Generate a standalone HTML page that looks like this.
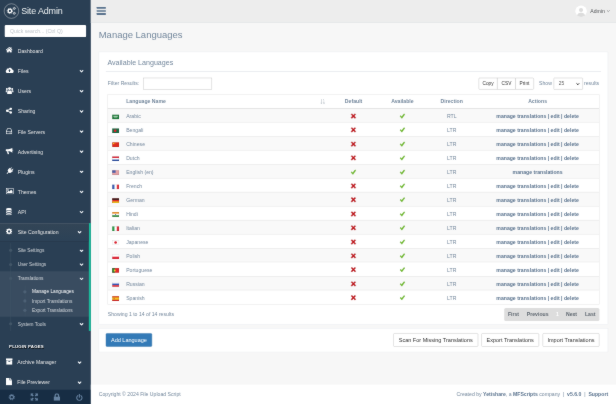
<!DOCTYPE html>
<html><head><meta charset="utf-8"><title>Manage Languages</title>
<style>
*{box-sizing:border-box;}
html,body{margin:0;padding:0;width:616px;height:404px;overflow:hidden;background:#F7F7F7;}
body{font-family:"Liberation Sans",sans-serif;}
#outer{position:absolute;left:0;top:0;width:616px;height:404px;overflow:hidden;filter:url(#soft);}
#wrap{position:absolute;left:0;top:0;width:1560px;height:1023px;transform:scale(0.394872);transform-origin:0 0;background:#F7F7F7;color:#73879C;font-size:13px;line-height:1.471;overflow:hidden;}
a{color:inherit;text-decoration:none;}
ul{list-style:none;margin:0;padding:0;}
/* sidebar */
#side{position:absolute;left:0;top:0;width:230px;height:1023px;background:#2A3F54;color:#ECF0F1;}
#logo{position:absolute;left:10px;top:9px;width:38px;height:38px;border:1.7px solid #EAEAEA;border-radius:50%;}
#logo svg{position:absolute;}
#title{position:absolute;left:53.5px;top:0;height:57px;line-height:57.5px;font-size:22.7px;letter-spacing:-0.33px;color:#ECF0F1;white-space:nowrap;}
#search{position:absolute;left:12px;top:63px;width:206px;height:31px;background:#fff;border-radius:3px;color:#bfc5cb;font-size:13px;line-height:31px;padding-left:13.6px;}
#menu{position:absolute;left:0;top:106.4px;width:230px;}
#menu>li{position:relative;}
#menu>li>a{display:block;height:45px;margin-bottom:6px;position:relative;color:#E7E7E7;font-size:13px;font-weight:normal;}
#menu .mi{position:absolute;fill:#fff;}
#menu .t{position:absolute;left:45px;top:0;line-height:47.8px;white-space:nowrap;}
#menu .chev{position:absolute;right:18.5px;top:19px;}
#menu>li.active{border-right:5px solid #1ABB9C;}
#menu>li.active>a{background:linear-gradient(#334556,#2C4257);box-shadow:rgba(0,0,0,.25) 0 1px 0, inset rgba(255,255,255,.16) 0 1px 0;}
.child{position:relative;}
.child>li{position:relative;}
.child>li>a{display:block;height:35.5px;line-height:35.5px;padding-left:45px;font-size:12px;color:rgba(255,255,255,.75);position:relative;white-space:nowrap;}
.child>li:before{content:"";position:absolute;left:23px;top:14px;width:8px;height:8px;border-radius:50%;background:#425668;z-index:1;}
.child>li:after{content:"";position:absolute;left:27px;top:0;bottom:0;border-left:1px solid #425668;}
.child .chev{right:13px !important;top:14.5px !important;}
.child>li.cur{background:rgba(255,255,255,0.07);}
.sub{padding:4px 0 5px;position:relative;}
.sub>li{position:relative;}
.sub>li>a{display:block;height:23.4px;line-height:23.4px;padding-left:81px;font-size:12px;color:rgba(255,255,255,.75);white-space:nowrap;}
.sub>li:before{content:"";position:absolute;left:59px;top:8px;width:8px;height:8px;border-radius:50%;background:#4d6175;z-index:1;}
.sub:after{content:"";position:absolute;left:63px;top:0;bottom:0;border-left:1px solid #425668;}
.sub>li.on>a{color:#fff;}
#ph{position:absolute;left:23px;top:868px;font-size:11px;font-weight:bold;letter-spacing:.5px;color:#fff;text-shadow:1px 1px #000;line-height:20px;white-space:nowrap;}
#menu2{position:absolute;left:0;top:894.8px;width:230px;}
#menu2>li>a{display:block;height:45px;margin-bottom:6.4px;position:relative;color:#E7E7E7;font-size:13px;}
#menu2 .mi{position:absolute;fill:#fff;}
#menu2 .t{position:absolute;left:44px;top:0;line-height:45px;white-space:nowrap;}
#menu2 .chev{position:absolute;right:23.5px;top:19px;}
#sfoot{position:absolute;left:0;top:987px;width:230px;height:36px;background:#172D44;}
#sfoot svg{position:absolute;}
/* top nav */
#top{position:absolute;left:230px;top:0;width:1330px;height:58px;background:#EDEDED;border-bottom:1px solid #D9DEE4;}
#burger{position:absolute;left:15px;top:18px;width:23px;height:20px;}
#burger i{display:block;height:4.4px;background:#5A738E;margin-bottom:3.2px;border-radius:.5px;}
#avatar{position:absolute;left:1227px;top:14px;width:29px;height:29px;border-radius:50%;background:#fff;overflow:hidden;}
#user{position:absolute;left:1265px;top:0;line-height:56px;font-size:13px;color:#515356;white-space:nowrap;}
/* content */
h3#pt{position:absolute;left:250px;top:73px;margin:0;font-size:24px;font-weight:normal;line-height:31px;color:#73879C;white-space:nowrap;}
.panel{position:absolute;left:250px;width:1290px;background:#fff;border:1px solid #E6E9ED;}
#p1{top:131px;height:691px;}
#p1i{position:absolute;left:0;top:2px;width:100%;}
#p2{top:831px;height:61px;}
#p1 h2{position:absolute;left:21px;top:11px;margin:0;font-size:18px;font-weight:normal;line-height:27px;color:#73879C;white-space:nowrap;}
#xt{position:absolute;left:17px;top:46px;width:1254px;border-bottom:2px solid #E6E9ED;}
#fl{position:absolute;left:22px;top:63px;line-height:30px;font-size:13px;white-space:nowrap;}
#fi{position:absolute;left:112px;top:63px;width:174px;height:30px;border:1px solid #bbb;background:#fff;}
.btn{position:absolute;height:30px;border:1px solid #bbb;background:#fff;color:#333;font-size:12px;line-height:28px;text-align:center;white-space:nowrap;}
#show{position:absolute;left:1114px;top:63px;line-height:30px;white-space:nowrap;}
#sel{position:absolute;left:1151px;top:63px;width:74px;height:30px;border:1px solid #bbb;border-radius:2px;background:#fff;color:#555;font-size:12px;line-height:28px;padding-left:12px;}
#res{position:absolute;left:1228px;top:63px;line-height:30px;white-space:nowrap;}
#tb{position:absolute;left:22px;top:105.8px;width:1244px;height:529.9px;font-size:13px;color:#73879C;}
.ln{position:absolute;background:#ddd;z-index:3;}
#th{position:absolute;left:0;top:0;width:1244px;height:35.8px;border-bottom:2px solid #ddd;background:#fff;z-index:2;font-weight:bold;line-height:33.2px;}
.r{position:absolute;left:0;width:1244px;height:35.4px;border-top:1px solid #ddd;line-height:39.2px;background:#fff;}
.r.odd{background:#f9f9f9;}
.k{position:absolute;top:0;white-space:nowrap;text-align:center;}
.fl{left:0;width:39.8px;}
.nm{left:46.5px;text-align:left;}
.c1{left:522.4px;width:200px;}
.c2{left:646px;width:200px;}
.c3{left:771px;width:200px;}
.c4{left:928.4px;width:320px;}
.act{font-weight:bold;color:#5A738E;}
svg.flag{display:inline-block;vertical-align:middle;}
svg.ic{display:inline-block;vertical-align:middle;position:relative;top:-1.7px;}
#info{position:absolute;left:22px;top:651px;line-height:20px;white-space:nowrap;}
#pag{position:absolute;left:1026px;top:645.5px;width:241px;height:33.5px;background:#ddd;border-radius:4px;font-size:13px;font-weight:bold;color:#5d666f;line-height:33.5px;}
#pag span{position:absolute;top:0;white-space:nowrap;}
.bb{position:absolute;top:12px;height:34px;border:1px solid #bbb;border-radius:3px;background:#fff;color:#333;font-size:14px;line-height:30.5px;text-align:center;white-space:nowrap;}
#add{left:17px;width:117px;background:#337ab7;border-color:#2e6da4;color:#fff;}
#foot{position:absolute;left:230px;top:974px;width:1330px;height:49px;background:#fff;font-size:13px;}
#foot .fL{position:absolute;left:20px;top:0;line-height:50px;white-space:nowrap;}
#foot .fR{position:absolute;right:20px;top:0;line-height:50px;white-space:pre;}
#foot b{color:#5A738E;}
</style></head><body>
<svg width="0" height="0" style="position:absolute"><defs><filter id="soft" x="0" y="0" width="100%" height="100%" color-interpolation-filters="sRGB"><feConvolveMatrix order="3" kernelMatrix="0.5 1.0 0.5 1.0 20.0 1.0 0.5 1.0 0.5" edgeMode="duplicate" preserveAlpha="true"/></filter></defs></svg>
<div id="outer"><div id="wrap">
 <div id="side">
  <div id="logo"><svg width="36" height="36" viewBox="0 0 36 36" style="left:-0.7px;top:-0.7px"><g fill="none" stroke="#fff"><circle cx="15" cy="18.8" r="4.4" stroke-width="3.2"/><circle cx="15" cy="18.8" r="6.7" stroke-width="2" stroke-dasharray="2.8 2.462"/><circle cx="26.2" cy="12.4" r="2.1" stroke-width="1.7"/><circle cx="26.2" cy="12.4" r="3.4" stroke-width="1.1" stroke-dasharray="1.4 1.27"/><circle cx="26.2" cy="24.6" r="2.1" stroke-width="1.7"/><circle cx="26.2" cy="24.6" r="3.4" stroke-width="1.1" stroke-dasharray="1.4 1.27"/></g></svg></div>
  <div id="title">Site Admin</div>
  <div id="search">Quick search... (Ctrl Q)</div>
  <ul id="menu">
<li><a><svg class="mi" style="left:15px;top:12.20px" width="16.8" height="14.6" viewBox="0 0 16.5 14" preserveAspectRatio="none"><path d="M8.25 0 L0 7 L1.2 8.5 L8.25 2.5 L15.3 8.5 L16.5 7 L13.8 4.7 V0.8 H11.4 V2.7 Z"/><path d="M8.25 3.6 L2.2 8.7 V14 H7 V10.2 H9.5 V14 H14.3 V8.7 Z"/></svg><span class="t">Dashboard</span></a></li>
<li><a><svg class="mi" style="left:14.3px;top:11.60px" width="20.3" height="16" viewBox="0 -0.6 20 16" preserveAspectRatio="none"><path d="M16.4 6.6 A5.2 5.2 0 0 0 6.8 4.2 A3.4 3.4 0 0 0 2.6 7.4 A4.2 4.2 0 0 0 4.2 15.4 H15.8 A4.4 4.4 0 0 0 16.4 6.6 Z M10 5.6 L13.4 9.2 H11.2 V12.8 H8.8 V9.2 H6.6 Z" fill-rule="evenodd"/></svg><span class="t">Files</span><svg class="chev" width="11" height="8" viewBox="0 0 11 8"><path d="M1.2 1.6 L5.5 5.9 L9.8 1.6" stroke="#eef2f6" stroke-width="2.9" fill="none"/></svg></a></li>
<li><a><svg class="mi" style="left:14.3px;top:12.00px" width="20.3" height="18" viewBox="0 0 20 18" preserveAspectRatio="none"><circle cx="10" cy="4.4" r="3.7"/><path d="M4.2 17.8 V12.8 A3.6 3.6 0 0 1 7.8 9.2 H12.2 A3.6 3.6 0 0 1 15.8 12.8 V17.8 Z"/><circle cx="3.4" cy="5.4" r="2.5"/><circle cx="16.6" cy="5.4" r="2.5"/><path d="M0 13.8 V10.8 A2.4 2.4 0 0 1 2.4 8.4 H5.2 A5.4 5.4 0 0 0 3.2 13.8 Z"/><path d="M20 13.8 V10.8 A2.4 2.4 0 0 0 17.6 8.4 H14.8 A5.4 5.4 0 0 1 16.8 13.8 Z"/></svg><span class="t">Users</span><svg class="chev" width="11" height="8" viewBox="0 0 11 8"><path d="M1.2 1.6 L5.5 5.9 L9.8 1.6" stroke="#eef2f6" stroke-width="2.9" fill="none"/></svg></a></li>
<li><a><svg class="mi" style="left:15px;top:12.40px" width="15.5" height="16.4" viewBox="0 0 15.5 16.4" preserveAspectRatio="none"><circle cx="12.3" cy="3.2" r="3.2"/><circle cx="12.3" cy="13.2" r="3.2"/><circle cx="3.2" cy="8.2" r="3.2"/><path d="M3.2 8.2 L12.3 3.2 M3.2 8.2 L12.3 13.2" stroke="#fff" stroke-width="2.2" fill="none"/></svg><span class="t">Sharing</span><svg class="chev" width="11" height="8" viewBox="0 0 11 8"><path d="M1.2 1.6 L5.5 5.9 L9.8 1.6" stroke="#eef2f6" stroke-width="2.9" fill="none"/></svg></a></li>
<li><a><svg class="mi" style="left:15px;top:14.50px" width="16" height="15" viewBox="0 0 16 15" preserveAspectRatio="none"><path d="M3.2 0 H12.8 L16 8.6 V13.6 A1.4 1.4 0 0 1 14.6 15 H1.4 A1.4 1.4 0 0 1 0 13.6 V8.6 Z M4.3 1.6 L2 8 H14 L11.7 1.6 Z M1.6 9.6 V13.4 H14.4 V9.6 Z M9.4 10.8 H10.8 V12.2 H9.4 Z M11.8 10.8 H13.2 V12.2 H11.8 Z" fill-rule="evenodd"/></svg><span class="t" style="line-height:49.6px">File Servers</span><svg class="chev" width="11" height="8" viewBox="0 0 11 8"><path d="M1.2 1.6 L5.5 5.9 L9.8 1.6" stroke="#eef2f6" stroke-width="2.9" fill="none"/></svg></a></li>
<li><a><svg class="mi" style="left:14.3px;top:12.90px" width="19.6" height="17" viewBox="0 0 19.6 17" preserveAspectRatio="none"><path d="M17.2 0.4 V12.8 C13.8 10.2 10.4 9.4 7.2 9.2 H2 A2 2 0 0 1 0 7.2 V6 A2 2 0 0 1 2 4 H7.2 C10.4 3.8 13.8 3 17.2 0.4 Z"/><path d="M3.4 9.2 H7 L8.8 15.2 A1 1 0 0 1 7.8 16.8 H5.6 Z"/><path d="M17.8 4.6 A2 2 0 0 1 17.8 8.6 Z"/></svg><span class="t">Advertising</span><svg class="chev" width="11" height="8" viewBox="0 0 11 8"><path d="M1.2 1.6 L5.5 5.9 L9.8 1.6" stroke="#eef2f6" stroke-width="2.9" fill="none"/></svg></a></li>
<li><a><svg class="mi" style="left:15px;top:12.10px" width="19" height="17.8" viewBox="0 0 19 17.8" preserveAspectRatio="none"><g transform="translate(10.6 7.8) rotate(45) scale(0.92)"><rect x="-4.2" y="-10" width="2.4" height="6"/><rect x="1.8" y="-10" width="2.4" height="6"/><rect x="-6.8" y="-4.4" width="13.6" height="2.4"/><path d="M-6 -2 H6 V0.6 A6 6 0 0 1 -6 0.6 Z"/><rect x="-1.2" y="6" width="2.4" height="6.5"/></g></svg><span class="t">Plugins</span><svg class="chev" width="11" height="8" viewBox="0 0 11 8"><path d="M1.2 1.6 L5.5 5.9 L9.8 1.6" stroke="#eef2f6" stroke-width="2.9" fill="none"/></svg></a></li>
<li><a><svg class="mi" style="left:15px;top:13.00px" width="19.6" height="16" viewBox="0 0 19.6 16" preserveAspectRatio="none"><path d="M1.4 0 H18.2 A1.4 1.4 0 0 1 19.6 1.4 V14.6 A1.4 1.4 0 0 1 18.2 16 H1.4 A1.4 1.4 0 0 1 0 14.6 V1.4 A1.4 1.4 0 0 1 1.4 0 Z M1.6 1.6 V14.4 H18 V1.6 Z M3 13 V10.6 L6.4 7.2 L8.4 9.2 L13.2 4.4 L16.6 7.8 V13 Z M5.2 3 A1.9 1.9 0 1 0 5.21 3 Z" fill-rule="evenodd"/></svg><span class="t">Themes</span><svg class="chev" width="11" height="8" viewBox="0 0 11 8"><path d="M1.2 1.6 L5.5 5.9 L9.8 1.6" stroke="#eef2f6" stroke-width="2.9" fill="none"/></svg></a></li>
<li><a><svg class="mi" style="left:15px;top:12.20px" width="15" height="18" viewBox="0 0 15 18" preserveAspectRatio="none"><ellipse cx="7.5" cy="3" rx="7.5" ry="3"/><path d="M0 5.2 C2 7.8 13 7.8 15 5.2 V8 C13 10.6 2 10.6 0 8 Z"/><path d="M0 9.7 C2 12.3 13 12.3 15 9.7 V12.5 C13 15.1 2 15.1 0 12.5 Z"/><path d="M0 14.2 C2 16.8 13 16.8 15 14.2 V15.4 C13 18.8 2 18.8 0 15.4 Z"/></svg><span class="t">API</span><svg class="chev" width="11" height="8" viewBox="0 0 11 8"><path d="M1.2 1.6 L5.5 5.9 L9.8 1.6" stroke="#eef2f6" stroke-width="2.9" fill="none"/></svg></a></li>

   <li class="active"><a><svg class="mi" style="left:15px;top:13.00px" width="16" height="16" viewBox="1 1 16 16" preserveAspectRatio="none"><path d="M9 1 L10.2 1 L10.7 3 L12.2 3.6 L14 2.6 L15.6 4.2 L14.5 5.9 L15.1 7.4 L17 7.9 V10.1 L15.1 10.6 L14.5 12.1 L15.6 13.8 L14 15.4 L12.2 14.4 L10.7 15 L10.2 17 H7.8 L7.3 15 L5.8 14.4 L4 15.4 L2.4 13.8 L3.5 12.1 L2.9 10.6 L1 10.1 V7.9 L2.9 7.4 L3.5 5.9 L2.4 4.2 L4 2.6 L5.8 3.6 L7.3 3 L7.8 1 Z M9 6.2 A2.8 2.8 0 1 0 9.01 6.2 Z" fill-rule="evenodd"/></svg><span class="t">Site Configuration</span><svg class="chev" width="11" height="8" viewBox="0 0 11 8"><path d="M1.2 1.6 L5.5 5.9 L9.8 1.6" stroke="#eef2f6" stroke-width="2.9" fill="none"/></svg></a>
    <ul class="child">
     <li><a>Site Settings<svg class="chev" width="11" height="8" viewBox="0 0 11 8"><path d="M1.2 1.6 L5.5 5.9 L9.8 1.6" stroke="#eef2f6" stroke-width="2.9" fill="none"/></svg></a></li>
     <li><a>User Settings<svg class="chev" width="11" height="8" viewBox="0 0 11 8"><path d="M1.2 1.6 L5.5 5.9 L9.8 1.6" stroke="#eef2f6" stroke-width="2.9" fill="none"/></svg></a></li>
     <li class="cur"><a>Translations<svg class="chev" width="11" height="8" viewBox="0 0 11 8"><path d="M1.2 1.6 L5.5 5.9 L9.8 1.6" stroke="#eef2f6" stroke-width="2.9" fill="none"/></svg></a>
      <ul class="sub">
       <li class="on"><a>Manage Languages</a></li>
       <li><a style="position:relative;top:1.4px">Import Translations</a></li>
       <li><a>Export Translations</a></li>
      </ul>
     </li>
     <li><a style="line-height:38.5px">System Tools<svg class="chev" width="11" height="8" viewBox="0 0 11 8"><path d="M1.2 1.6 L5.5 5.9 L9.8 1.6" stroke="#eef2f6" stroke-width="2.9" fill="none"/></svg></a></li>
    </ul>
   </li>
  </ul>
  <div id="ph">PLUGIN PAGES</div>
  <ul id="menu2">
   <li><a><svg class="mi" style="left:15.3px;top:12.20px" width="17.2" height="17" viewBox="0 0 17.2 17" preserveAspectRatio="none"><path d="M0 0 H17.2 V4.6 H0 Z M1 5.6 H16.2 V17 H1 Z M6.2 7.6 V9.6 H11 V7.6 Z" fill-rule="evenodd"/></svg><span class="t">Archive Manager</span><svg class="chev" width="11" height="8" viewBox="0 0 11 8"><path d="M1.2 1.6 L5.5 5.9 L9.8 1.6" stroke="#eef2f6" stroke-width="2.9" fill="none"/></svg></a></li>
   <li><a><svg class="mi" style="left:15.3px;top:10.95px" width="15.3" height="18.5" viewBox="0 0 15.3 18.5" preserveAspectRatio="none"><path d="M0 0 H9 V6 H15.3 V18.5 H0 Z M10.4 0.2 L15.1 4.8 H10.4 Z"/></svg><span class="t">File Previewer</span><svg class="chev" width="11" height="8" viewBox="0 0 11 8"><path d="M1.2 1.6 L5.5 5.9 L9.8 1.6" stroke="#eef2f6" stroke-width="2.9" fill="none"/></svg></a></li>
  </ul>
  <div id="sfoot">
   <svg style="left:20.5px;top:10px" width="17.5" height="17.5" viewBox="0 0 18 18"><g fill="none" stroke="#6682a0"><circle cx="9" cy="9" r="4.7" stroke-width="3"/><circle cx="9" cy="9" r="7.1" stroke-width="2.4" stroke-dasharray="3 2.576" transform="rotate(12 9 9)"/></g></svg>
   <svg style="left:76.5px;top:9px" width="19.5" height="19" viewBox="0 0 18 18"><g fill="#6682a0"><path d="M0 0 H7.4 L5 2.4 L7.9 5.3 L5.3 7.9 L2.4 5 L0 7.4 Z"/><path d="M18 0 V7.4 L15.6 5 L12.7 7.9 L10.1 5.3 L13 2.4 L10.6 0 Z"/><path d="M0 18 V10.6 L2.4 13 L5.3 10.1 L7.9 12.7 L5 15.6 L7.4 18 Z"/><path d="M18 18 H10.6 L13 15.6 L10.1 12.7 L12.7 10.1 L15.6 13 L18 10.6 Z"/></g></svg>
   <svg style="left:134.5px;top:9px" width="18" height="19" viewBox="0 0 17 18"><path fill="#6682a0" d="M1 8 H2.8 V5.7 A5.7 5.7 0 0 1 14.2 5.7 V8 H16 V18 H1 Z M5.9 8 H11.1 V5.7 A2.6 2.6 0 0 0 5.9 5.7 Z" fill-rule="evenodd"/></svg>
   <svg style="left:192px;top:9.5px" width="18" height="18.5" viewBox="0 0 17 18"><path fill="none" stroke="#6682a0" stroke-width="2.7" stroke-linecap="round" d="M8.5 1.4 V8.6 M4.6 4.9 A6.5 6.5 0 1 0 12.4 4.9"/></svg>
  </div>
 </div>
 <div id="top">
  <div id="burger"><i></i><i></i><i></i></div>
  <div id="avatar"><svg width="29" height="29" viewBox="0 0 29 29"><circle cx="14.5" cy="11.5" r="5.2" fill="#dcdcdc"/><path d="M4 29 C4 20 9 18 14.5 18 C20 18 25 20 25 29 Z" fill="#dcdcdc"/></svg></div>
  <div id="user">Admin <svg width="9" height="8" viewBox="0 0 9 8" style="margin-left:1px"><path d="M1 2 L4.5 5.5 L8 2" fill="none" stroke="#515356" stroke-width="1.2"/></svg></div>
 </div>
 <h3 id="pt">Manage Languages</h3>
 <div class="panel" id="p1"><div id="p1i">
  <h2>Available Languages</h2>
  <div id="xt"></div>
  <div id="fl">Filter Results:</div><div id="fi"></div>
  <div class="btn" style="left:961px;top:63px;width:48px;border-radius:3px 0 0 3px;">Copy</div>
  <div class="btn" style="left:1008px;top:63px;width:47px;">CSV</div>
  <div class="btn" style="left:1054px;top:63px;width:46.5px;border-radius:0 3px 3px 0;">Print</div>
  <div id="show">Show</div>
  <div id="sel">25<svg width="9" height="8" viewBox="0 0 9 8" style="position:absolute;right:7px;top:11px"><path d="M0.8 1.8 L4.5 5.5 L8.2 1.8" fill="none" stroke="#222" stroke-width="2.5"/></svg></div>
  <div id="res">results</div>
  <div id="tb"><div class="ln" style="left:-1px;top:-1px;width:1246px;height:1px"></div><div class="ln" style="left:-1px;top:529.9px;width:1246px;height:1px"></div><div class="ln" style="left:-1px;top:0;width:1px;height:530px"></div><div class="ln" style="left:1244px;top:0;width:1px;height:530px"></div>
   <div id="th"><span class="k nm">Language Name</span><svg width="12" height="13" viewBox="0 0 12 13" style="position:absolute;left:538px;top:11px"><g fill="#bfc6cd"><rect x="2" y="0" width="1.6" height="10"/><path d="M0 9 L2.8 13 L5.6 9 Z"/><rect x="7" y="0.5" width="2.5" height="1.6"/><rect x="7" y="4" width="3.5" height="1.6"/><rect x="7" y="7.5" width="4.2" height="1.6"/><rect x="7" y="11" width="5" height="1.6"/></g></svg><span class="k c1">Default</span><span class="k c2">Available</span><span class="k c3">Direction</span><span class="k c4">Actions</span></div>
<div class="r odd" style="top:34.30px"><span class="k fl"><svg class="flag" width="17.6" height="12.2" viewBox="0 0 16 11" preserveAspectRatio="none"><rect width="16" height="11" fill="#1f7a3a"/><rect x="3" y="3" width="10" height="2.5" fill="#cfe6d3" opacity=".8"/><rect x="4" y="7" width="8" height="1" fill="#e8f3ea" opacity=".8"/><rect x=".5" y=".5" width="15" height="10" fill="none" stroke="#000" stroke-opacity=".2" stroke-width="1"/></svg></span><span class="k nm">Arabic</span><span class="k c1"><svg class="ic" width="16" height="16" viewBox="1.4 1.4 13.2 13.2"><path d="M3.2 4.6 L4.9 2.9 L8 6 L11.1 2.9 L12.8 4.6 L9.8 7.8 L13 11.2 L11.2 13 L8 9.7 L4.8 13 L3 11.2 L6.2 7.8 Z" fill="#c8191f" stroke="#8a0d11" stroke-width=".6" stroke-linejoin="round"/></svg></span><span class="k c2"><svg class="ic" width="16" height="16" viewBox="0.9 0.9 14.2 14.2"><path d="M2.6 8.6 L4.4 6.9 L6.6 9.2 L11.6 2.8 L13.6 4.2 L6.9 13.2 Z" fill="#76c030" stroke="#468f18" stroke-width=".6" stroke-linejoin="round"/></svg></span><span class="k c3">RTL</span><span class="k c4 act"><a>manage translations</a> | <a>edit</a> | <a>delete</a></span></div>
<div class="r even" style="top:69.70px"><span class="k fl"><svg class="flag" width="17.6" height="12.2" viewBox="0 0 16 11" preserveAspectRatio="none"><rect width="16" height="11" fill="#1b6b43"/><circle cx="7" cy="5.5" r="3" fill="#e2232e"/><rect x=".5" y=".5" width="15" height="10" fill="none" stroke="#000" stroke-opacity=".2" stroke-width="1"/></svg></span><span class="k nm">Bengali</span><span class="k c1"><svg class="ic" width="16" height="16" viewBox="1.4 1.4 13.2 13.2"><path d="M3.2 4.6 L4.9 2.9 L8 6 L11.1 2.9 L12.8 4.6 L9.8 7.8 L13 11.2 L11.2 13 L8 9.7 L4.8 13 L3 11.2 L6.2 7.8 Z" fill="#c8191f" stroke="#8a0d11" stroke-width=".6" stroke-linejoin="round"/></svg></span><span class="k c2"><svg class="ic" width="16" height="16" viewBox="0.9 0.9 14.2 14.2"><path d="M2.6 8.6 L4.4 6.9 L6.6 9.2 L11.6 2.8 L13.6 4.2 L6.9 13.2 Z" fill="#76c030" stroke="#468f18" stroke-width=".6" stroke-linejoin="round"/></svg></span><span class="k c3">LTR</span><span class="k c4 act"><a>manage translations</a> | <a>edit</a> | <a>delete</a></span></div>
<div class="r odd" style="top:105.10px"><span class="k fl"><svg class="flag" width="17.6" height="12.2" viewBox="0 0 16 11" preserveAspectRatio="none"><rect width="16" height="11" fill="#de2a1c"/><rect x="2" y="1.5" width="3" height="3" fill="#f7d21a"/><rect x="6" y="1" width="1" height="1" fill="#f7d21a"/><rect x="7" y="3" width="1" height="1" fill="#f7d21a"/><rect x=".5" y=".5" width="15" height="10" fill="none" stroke="#000" stroke-opacity=".2" stroke-width="1"/></svg></span><span class="k nm">Chinese</span><span class="k c1"><svg class="ic" width="16" height="16" viewBox="1.4 1.4 13.2 13.2"><path d="M3.2 4.6 L4.9 2.9 L8 6 L11.1 2.9 L12.8 4.6 L9.8 7.8 L13 11.2 L11.2 13 L8 9.7 L4.8 13 L3 11.2 L6.2 7.8 Z" fill="#c8191f" stroke="#8a0d11" stroke-width=".6" stroke-linejoin="round"/></svg></span><span class="k c2"><svg class="ic" width="16" height="16" viewBox="0.9 0.9 14.2 14.2"><path d="M2.6 8.6 L4.4 6.9 L6.6 9.2 L11.6 2.8 L13.6 4.2 L6.9 13.2 Z" fill="#76c030" stroke="#468f18" stroke-width=".6" stroke-linejoin="round"/></svg></span><span class="k c3">LTR</span><span class="k c4 act"><a>manage translations</a> | <a>edit</a> | <a>delete</a></span></div>
<div class="r even" style="top:140.50px"><span class="k fl"><svg class="flag" width="17.6" height="12.2" viewBox="0 0 16 11" preserveAspectRatio="none"><rect width="16" height="11" fill="#fff"/><rect width="16" height="3.7" fill="#d8283a"/><rect y="7.3" width="16" height="3.7" fill="#2b4ea3"/><rect x=".5" y=".5" width="15" height="10" fill="none" stroke="#000" stroke-opacity=".2" stroke-width="1"/></svg></span><span class="k nm">Dutch</span><span class="k c1"><svg class="ic" width="16" height="16" viewBox="1.4 1.4 13.2 13.2"><path d="M3.2 4.6 L4.9 2.9 L8 6 L11.1 2.9 L12.8 4.6 L9.8 7.8 L13 11.2 L11.2 13 L8 9.7 L4.8 13 L3 11.2 L6.2 7.8 Z" fill="#c8191f" stroke="#8a0d11" stroke-width=".6" stroke-linejoin="round"/></svg></span><span class="k c2"><svg class="ic" width="16" height="16" viewBox="0.9 0.9 14.2 14.2"><path d="M2.6 8.6 L4.4 6.9 L6.6 9.2 L11.6 2.8 L13.6 4.2 L6.9 13.2 Z" fill="#76c030" stroke="#468f18" stroke-width=".6" stroke-linejoin="round"/></svg></span><span class="k c3">LTR</span><span class="k c4 act"><a>manage translations</a> | <a>edit</a> | <a>delete</a></span></div>
<div class="r odd" style="top:175.90px"><span class="k fl"><svg class="flag" width="17.6" height="12.2" viewBox="0 0 16 11" preserveAspectRatio="none"><rect width="16" height="11" fill="#f3e9ea"/><g fill="#d9636b"><rect y="0" width="16" height="1.2"/><rect y="2.4" width="16" height="1.2"/><rect y="4.9" width="16" height="1.2"/><rect y="7.3" width="16" height="1.2"/><rect y="9.8" width="16" height="1.2"/></g><rect width="8" height="6" fill="#4a5fa8"/><rect x=".5" y=".5" width="15" height="10" fill="none" stroke="#000" stroke-opacity=".2" stroke-width="1"/></svg></span><span class="k nm">English (en)</span><span class="k c1"><svg class="ic" width="16" height="16" viewBox="0.9 0.9 14.2 14.2"><path d="M2.6 8.6 L4.4 6.9 L6.6 9.2 L11.6 2.8 L13.6 4.2 L6.9 13.2 Z" fill="#76c030" stroke="#468f18" stroke-width=".6" stroke-linejoin="round"/></svg></span><span class="k c2"><svg class="ic" width="16" height="16" viewBox="0.9 0.9 14.2 14.2"><path d="M2.6 8.6 L4.4 6.9 L6.6 9.2 L11.6 2.8 L13.6 4.2 L6.9 13.2 Z" fill="#76c030" stroke="#468f18" stroke-width=".6" stroke-linejoin="round"/></svg></span><span class="k c3">LTR</span><span class="k c4 act"><a>manage translations</a></span></div>
<div class="r even" style="top:211.30px"><span class="k fl"><svg class="flag" width="17.6" height="12.2" viewBox="0 0 16 11" preserveAspectRatio="none"><rect width="16" height="11" fill="#fff"/><rect width="5.3" height="11" fill="#3b5cb0"/><rect x="10.7" width="5.3" height="11" fill="#e0353f"/><rect x=".5" y=".5" width="15" height="10" fill="none" stroke="#000" stroke-opacity=".2" stroke-width="1"/></svg></span><span class="k nm">French</span><span class="k c1"><svg class="ic" width="16" height="16" viewBox="1.4 1.4 13.2 13.2"><path d="M3.2 4.6 L4.9 2.9 L8 6 L11.1 2.9 L12.8 4.6 L9.8 7.8 L13 11.2 L11.2 13 L8 9.7 L4.8 13 L3 11.2 L6.2 7.8 Z" fill="#c8191f" stroke="#8a0d11" stroke-width=".6" stroke-linejoin="round"/></svg></span><span class="k c2"><svg class="ic" width="16" height="16" viewBox="0.9 0.9 14.2 14.2"><path d="M2.6 8.6 L4.4 6.9 L6.6 9.2 L11.6 2.8 L13.6 4.2 L6.9 13.2 Z" fill="#76c030" stroke="#468f18" stroke-width=".6" stroke-linejoin="round"/></svg></span><span class="k c3">LTR</span><span class="k c4 act"><a>manage translations</a> | <a>edit</a> | <a>delete</a></span></div>
<div class="r odd" style="top:246.70px"><span class="k fl"><svg class="flag" width="17.6" height="12.2" viewBox="0 0 16 11" preserveAspectRatio="none"><rect width="16" height="11" fill="#e12b2b"/><rect width="16" height="3.7" fill="#222"/><rect y="7.3" width="16" height="3.7" fill="#f5c81e"/><rect x=".5" y=".5" width="15" height="10" fill="none" stroke="#000" stroke-opacity=".2" stroke-width="1"/></svg></span><span class="k nm">German</span><span class="k c1"><svg class="ic" width="16" height="16" viewBox="1.4 1.4 13.2 13.2"><path d="M3.2 4.6 L4.9 2.9 L8 6 L11.1 2.9 L12.8 4.6 L9.8 7.8 L13 11.2 L11.2 13 L8 9.7 L4.8 13 L3 11.2 L6.2 7.8 Z" fill="#c8191f" stroke="#8a0d11" stroke-width=".6" stroke-linejoin="round"/></svg></span><span class="k c2"><svg class="ic" width="16" height="16" viewBox="0.9 0.9 14.2 14.2"><path d="M2.6 8.6 L4.4 6.9 L6.6 9.2 L11.6 2.8 L13.6 4.2 L6.9 13.2 Z" fill="#76c030" stroke="#468f18" stroke-width=".6" stroke-linejoin="round"/></svg></span><span class="k c3">LTR</span><span class="k c4 act"><a>manage translations</a> | <a>edit</a> | <a>delete</a></span></div>
<div class="r even" style="top:282.10px"><span class="k fl"><svg class="flag" width="17.6" height="12.2" viewBox="0 0 16 11" preserveAspectRatio="none"><rect width="16" height="11" fill="#fff"/><rect width="16" height="3.7" fill="#f2962f"/><rect y="7.3" width="16" height="3.7" fill="#2e8b37"/><circle cx="8" cy="5.5" r="1.3" fill="#4456a8"/><rect x=".5" y=".5" width="15" height="10" fill="none" stroke="#000" stroke-opacity=".2" stroke-width="1"/></svg></span><span class="k nm">Hindi</span><span class="k c1"><svg class="ic" width="16" height="16" viewBox="1.4 1.4 13.2 13.2"><path d="M3.2 4.6 L4.9 2.9 L8 6 L11.1 2.9 L12.8 4.6 L9.8 7.8 L13 11.2 L11.2 13 L8 9.7 L4.8 13 L3 11.2 L6.2 7.8 Z" fill="#c8191f" stroke="#8a0d11" stroke-width=".6" stroke-linejoin="round"/></svg></span><span class="k c2"><svg class="ic" width="16" height="16" viewBox="0.9 0.9 14.2 14.2"><path d="M2.6 8.6 L4.4 6.9 L6.6 9.2 L11.6 2.8 L13.6 4.2 L6.9 13.2 Z" fill="#76c030" stroke="#468f18" stroke-width=".6" stroke-linejoin="round"/></svg></span><span class="k c3">LTR</span><span class="k c4 act"><a>manage translations</a> | <a>edit</a> | <a>delete</a></span></div>
<div class="r odd" style="top:317.50px"><span class="k fl"><svg class="flag" width="17.6" height="12.2" viewBox="0 0 16 11" preserveAspectRatio="none"><rect width="16" height="11" fill="#fff"/><rect width="5.3" height="11" fill="#2e9a48"/><rect x="10.7" width="5.3" height="11" fill="#d8303a"/><rect x=".5" y=".5" width="15" height="10" fill="none" stroke="#000" stroke-opacity=".2" stroke-width="1"/></svg></span><span class="k nm">Italian</span><span class="k c1"><svg class="ic" width="16" height="16" viewBox="1.4 1.4 13.2 13.2"><path d="M3.2 4.6 L4.9 2.9 L8 6 L11.1 2.9 L12.8 4.6 L9.8 7.8 L13 11.2 L11.2 13 L8 9.7 L4.8 13 L3 11.2 L6.2 7.8 Z" fill="#c8191f" stroke="#8a0d11" stroke-width=".6" stroke-linejoin="round"/></svg></span><span class="k c2"><svg class="ic" width="16" height="16" viewBox="0.9 0.9 14.2 14.2"><path d="M2.6 8.6 L4.4 6.9 L6.6 9.2 L11.6 2.8 L13.6 4.2 L6.9 13.2 Z" fill="#76c030" stroke="#468f18" stroke-width=".6" stroke-linejoin="round"/></svg></span><span class="k c3">LTR</span><span class="k c4 act"><a>manage translations</a> | <a>edit</a> | <a>delete</a></span></div>
<div class="r even" style="top:352.90px"><span class="k fl"><svg class="flag" width="17.6" height="12.2" viewBox="0 0 16 11" preserveAspectRatio="none"><rect width="16" height="11" fill="#fff" stroke="#e4e4e4" stroke-width="1"/><circle cx="8" cy="5.5" r="3" fill="#d8202e"/><rect x=".5" y=".5" width="15" height="10" fill="none" stroke="#000" stroke-opacity=".07" stroke-width="1"/></svg></span><span class="k nm">Japanese</span><span class="k c1"><svg class="ic" width="16" height="16" viewBox="1.4 1.4 13.2 13.2"><path d="M3.2 4.6 L4.9 2.9 L8 6 L11.1 2.9 L12.8 4.6 L9.8 7.8 L13 11.2 L11.2 13 L8 9.7 L4.8 13 L3 11.2 L6.2 7.8 Z" fill="#c8191f" stroke="#8a0d11" stroke-width=".6" stroke-linejoin="round"/></svg></span><span class="k c2"><svg class="ic" width="16" height="16" viewBox="0.9 0.9 14.2 14.2"><path d="M2.6 8.6 L4.4 6.9 L6.6 9.2 L11.6 2.8 L13.6 4.2 L6.9 13.2 Z" fill="#76c030" stroke="#468f18" stroke-width=".6" stroke-linejoin="round"/></svg></span><span class="k c3">LTR</span><span class="k c4 act"><a>manage translations</a> | <a>edit</a> | <a>delete</a></span></div>
<div class="r odd" style="top:388.30px"><span class="k fl"><svg class="flag" width="17.6" height="12.2" viewBox="0 0 16 11" preserveAspectRatio="none"><rect width="16" height="11" fill="#fff" stroke="#e4e4e4" stroke-width="1"/><rect y="5.5" width="16" height="5.5" fill="#dc2838"/><rect x=".5" y=".5" width="15" height="10" fill="none" stroke="#000" stroke-opacity=".07" stroke-width="1"/></svg></span><span class="k nm">Polish</span><span class="k c1"><svg class="ic" width="16" height="16" viewBox="1.4 1.4 13.2 13.2"><path d="M3.2 4.6 L4.9 2.9 L8 6 L11.1 2.9 L12.8 4.6 L9.8 7.8 L13 11.2 L11.2 13 L8 9.7 L4.8 13 L3 11.2 L6.2 7.8 Z" fill="#c8191f" stroke="#8a0d11" stroke-width=".6" stroke-linejoin="round"/></svg></span><span class="k c2"><svg class="ic" width="16" height="16" viewBox="0.9 0.9 14.2 14.2"><path d="M2.6 8.6 L4.4 6.9 L6.6 9.2 L11.6 2.8 L13.6 4.2 L6.9 13.2 Z" fill="#76c030" stroke="#468f18" stroke-width=".6" stroke-linejoin="round"/></svg></span><span class="k c3">LTR</span><span class="k c4 act"><a>manage translations</a> | <a>edit</a> | <a>delete</a></span></div>
<div class="r even" style="top:423.70px"><span class="k fl"><svg class="flag" width="17.6" height="12.2" viewBox="0 0 16 11" preserveAspectRatio="none"><rect width="16" height="11" fill="#e02a2a"/><rect width="6" height="11" fill="#2c8a3c"/><circle cx="6" cy="5.5" r="2.2" fill="#f3d22a"/><rect x=".5" y=".5" width="15" height="10" fill="none" stroke="#000" stroke-opacity=".2" stroke-width="1"/></svg></span><span class="k nm">Portuguese</span><span class="k c1"><svg class="ic" width="16" height="16" viewBox="1.4 1.4 13.2 13.2"><path d="M3.2 4.6 L4.9 2.9 L8 6 L11.1 2.9 L12.8 4.6 L9.8 7.8 L13 11.2 L11.2 13 L8 9.7 L4.8 13 L3 11.2 L6.2 7.8 Z" fill="#c8191f" stroke="#8a0d11" stroke-width=".6" stroke-linejoin="round"/></svg></span><span class="k c2"><svg class="ic" width="16" height="16" viewBox="0.9 0.9 14.2 14.2"><path d="M2.6 8.6 L4.4 6.9 L6.6 9.2 L11.6 2.8 L13.6 4.2 L6.9 13.2 Z" fill="#76c030" stroke="#468f18" stroke-width=".6" stroke-linejoin="round"/></svg></span><span class="k c3">LTR</span><span class="k c4 act"><a>manage translations</a> | <a>edit</a> | <a>delete</a></span></div>
<div class="r odd" style="top:459.10px"><span class="k fl"><svg class="flag" width="17.6" height="12.2" viewBox="0 0 16 11" preserveAspectRatio="none"><rect width="16" height="11" fill="#fff" stroke="#e4e4e4" stroke-width="1"/><rect y="3.7" width="16" height="3.7" fill="#3454b4"/><rect y="7.3" width="16" height="3.7" fill="#d8303a"/><rect x=".5" y=".5" width="15" height="10" fill="none" stroke="#000" stroke-opacity=".07" stroke-width="1"/></svg></span><span class="k nm">Russian</span><span class="k c1"><svg class="ic" width="16" height="16" viewBox="1.4 1.4 13.2 13.2"><path d="M3.2 4.6 L4.9 2.9 L8 6 L11.1 2.9 L12.8 4.6 L9.8 7.8 L13 11.2 L11.2 13 L8 9.7 L4.8 13 L3 11.2 L6.2 7.8 Z" fill="#c8191f" stroke="#8a0d11" stroke-width=".6" stroke-linejoin="round"/></svg></span><span class="k c2"><svg class="ic" width="16" height="16" viewBox="0.9 0.9 14.2 14.2"><path d="M2.6 8.6 L4.4 6.9 L6.6 9.2 L11.6 2.8 L13.6 4.2 L6.9 13.2 Z" fill="#76c030" stroke="#468f18" stroke-width=".6" stroke-linejoin="round"/></svg></span><span class="k c3">LTR</span><span class="k c4 act"><a>manage translations</a> | <a>edit</a> | <a>delete</a></span></div>
<div class="r even" style="top:494.50px"><span class="k fl"><svg class="flag" width="17.6" height="12.2" viewBox="0 0 16 11" preserveAspectRatio="none"><rect width="16" height="11" fill="#f6c51e"/><rect width="16" height="2.8" fill="#d8252f"/><rect y="8.2" width="16" height="2.8" fill="#d8252f"/><rect x="3.5" y="4" width="2" height="3" fill="#b5562c"/><rect x=".5" y=".5" width="15" height="10" fill="none" stroke="#000" stroke-opacity=".2" stroke-width="1"/></svg></span><span class="k nm">Spanish</span><span class="k c1"><svg class="ic" width="16" height="16" viewBox="1.4 1.4 13.2 13.2"><path d="M3.2 4.6 L4.9 2.9 L8 6 L11.1 2.9 L12.8 4.6 L9.8 7.8 L13 11.2 L11.2 13 L8 9.7 L4.8 13 L3 11.2 L6.2 7.8 Z" fill="#c8191f" stroke="#8a0d11" stroke-width=".6" stroke-linejoin="round"/></svg></span><span class="k c2"><svg class="ic" width="16" height="16" viewBox="0.9 0.9 14.2 14.2"><path d="M2.6 8.6 L4.4 6.9 L6.6 9.2 L11.6 2.8 L13.6 4.2 L6.9 13.2 Z" fill="#76c030" stroke="#468f18" stroke-width=".6" stroke-linejoin="round"/></svg></span><span class="k c3">LTR</span><span class="k c4 act"><a>manage translations</a> | <a>edit</a> | <a>delete</a></span></div>

  </div>
  <div id="info">Showing 1 to 14 of 14 results</div>
  <div id="pag"><span style="left:9.3px">First</span><span style="left:57.2px">Previous</span><span style="left:131.2px;color:#fff">1</span><span style="left:156.2px">Next</span><span style="left:204.3px">Last</span></div>
 </div></div>
 <div class="panel" id="p2">
  <div class="bb" id="add">Add Language</div>
  <div class="bb" style="left:745px;width:215px;">Scan For Missing Translations</div>
  <div class="bb" style="left:968px;width:146px;">Export Translations</div>
  <div class="bb" style="left:1123px;width:144px;">Import Translations</div>
 </div>
 <div id="foot"><div class="fL">Copyright © 2024 File Upload Script</div><div class="fR">Created by <b>Yetishare</b>, a <b>MFScripts</b> company  |  <b>v5.6.0</b>  |  <b>Support</b></div></div>
</div></div>
</body></html>
